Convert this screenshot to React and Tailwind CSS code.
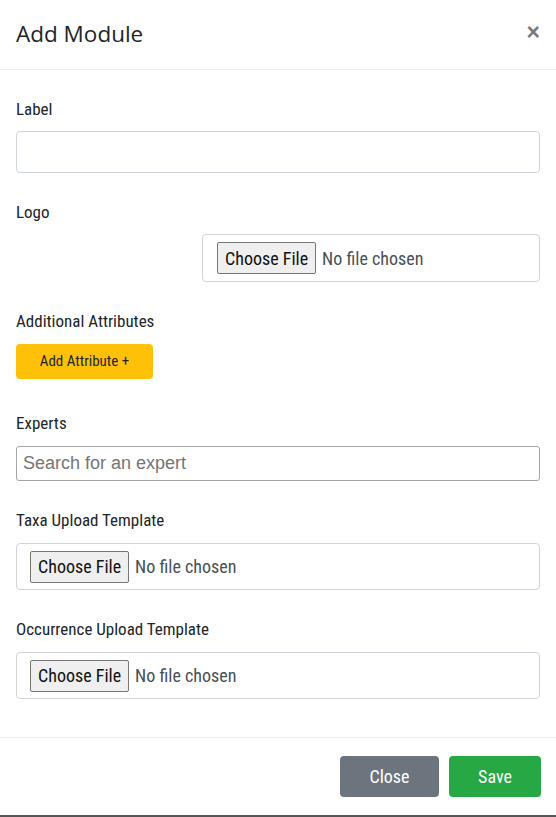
export default function App() {
  const label =
    "block text-[17px] leading-[24px] font-[380] text-[#212529] font-['Roboto',sans-serif] [font-stretch:condensed]";
  const fileBtn =
    "h-[32px] px-[7px] bg-[#efefef] border border-[#767676] rounded-[2px] text-[18px] font-[380] text-[#111] font-['Roboto',sans-serif] [font-stretch:condensed] flex items-center";
  const fileTxt =
    "ml-[6px] text-[18px] font-[380] text-[#495057] font-['Roboto',sans-serif] [font-stretch:condensed]";
  return (
    <div className="w-[556px] h-[817px] bg-white flex flex-col border-b-2 border-[#555] font-['Roboto',sans-serif]">
      <div className="h-[70px] shrink-0 flex items-center justify-between pl-4 pr-[16px] border-b border-[#e9ecef]">
        <h5 className="text-[22.5px] leading-[30px] -mt-[2px] text-[#212529] font-['Open_Sans',sans-serif]">
          Add Module
        </h5>
        <span className="text-[23px] leading-none font-bold text-[#7a7a7a] font-['Liberation_Sans',sans-serif] -mt-[4px]">
          ×
        </span>
      </div>

      <div className="flex-1 px-4 pt-[27px]">
        <label className={label}>Label</label>
        <input
          type="text"
          className="mt-[10px] block w-full h-[42px] border border-[#ced4da] rounded-[4px] outline-none"
        />

        <label className={`${label} mt-[27px]`}>Logo</label>
        <div className="mt-[10px] ml-[186px] h-[48px] border border-[#ced4da] rounded-[4px] flex items-center pl-[14px]">
          <span className={fileBtn}>Choose File</span>
          <span className={fileTxt}>No file chosen</span>
        </div>

        <label className={`${label} mt-[27px]`}>Additional Attributes</label>
        <button className="mt-[11px] h-[35px] w-[137px] bg-[#ffc107] rounded-[4px] text-[15px] font-[380] text-[#212529] font-['Roboto',sans-serif] [font-stretch:condensed]">
          Add Attribute +
        </button>

        <label className={`${label} mt-[32px]`}>Experts</label>
        <input
          type="text"
          placeholder="Search for an expert"
          className="mt-[11px] block w-full h-[35px] border border-[#a6a6a6] rounded-[3px] px-[6px] text-[18px] font-['Liberation_Sans',sans-serif] placeholder:text-[#757575] outline-none"
        />

        <label className={`${label} mt-[27px]`}>Taxa Upload Template</label>
        <div className="mt-[11px] h-[47px] border border-[#ced4da] rounded-[4px] flex items-center pl-[13px]">
          <span className={fileBtn}>Choose File</span>
          <span className={fileTxt}>No file chosen</span>
        </div>

        <label className={`${label} mt-[27px]`}>Occurrence Upload Template</label>
        <div className="mt-[11px] h-[47px] border border-[#ced4da] rounded-[4px] flex items-center pl-[13px]">
          <span className={fileBtn}>Choose File</span>
          <span className={fileTxt}>No file chosen</span>
        </div>
      </div>

      <div className="h-[78px] shrink-0 border-t border-[#e9ecef] flex items-center justify-end gap-[10px] pr-[15px]">
        <button className="h-[41px] w-[99px] rounded-[4px] bg-[#6c757d] text-white text-[18px] font-['Roboto',sans-serif] [font-stretch:condensed]">
          Close
        </button>
        <button className="h-[41px] w-[92px] rounded-[4px] bg-[#28a745] text-white text-[18px] font-['Roboto',sans-serif] [font-stretch:condensed]">
          Save
        </button>
      </div>
    </div>
  );
}
